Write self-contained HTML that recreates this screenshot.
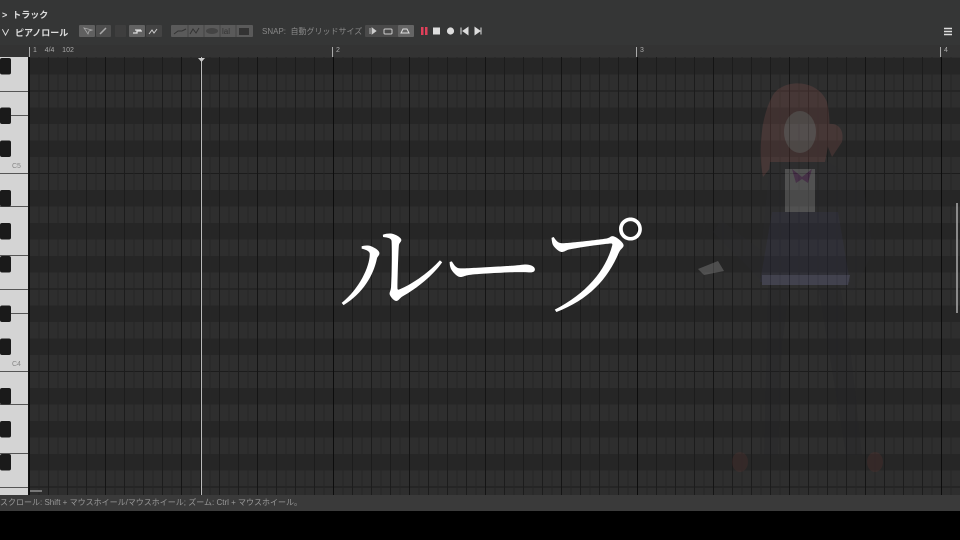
<!DOCTYPE html>
<html><head><meta charset="utf-8">
<style>
*{margin:0;padding:0;box-sizing:border-box}
body{width:960px;height:540px;background:#000;overflow:hidden;font-family:"Liberation Sans","Noto Sans CJK JP",sans-serif;position:relative}
.hdr{position:absolute;left:0;top:0;width:960px;height:45px;background:#353636}
.t{position:absolute;color:#ddd;font-size:9px;font-weight:bold;white-space:nowrap}
.btn{position:absolute;top:25px;height:12px;background:#555;border-radius:1px}
.ruler{position:absolute;left:0;top:45px;width:960px;height:12px;background:#333}
.rl{position:absolute;top:47px;font-size:7px;color:#aaa;border-left:1px solid #aaa;padding-left:3px;height:10px;line-height:8px}
.status{position:absolute;left:0;top:495px;width:960px;height:16px;background:#3a3a3a;color:#999;font-size:8px;line-height:16px}
</style></head><body>
<div class="hdr"></div>
<div class="t" style="left:2px;top:8px">&gt;&nbsp; トラック</div>
<div class="t" style="left:1px;top:26px">&#8744;&nbsp; ピアノロール</div>
<div class="btn" style="left:79px;width:16px;background:#606060"></div>
<div class="btn" style="left:96px;width:15px;background:#4e4e4e"></div>
<div class="btn" style="left:115px;width:11px;background:#3e3e3e"></div>
<div class="btn" style="left:129px;width:16px;background:#626262"></div>
<div class="btn" style="left:146px;width:16px;background:#444"></div>
<div class="btn" style="left:171px;width:82px;background:#5a5a5a"></div>
<svg style="position:absolute;left:0;top:25px" width="260" height="12">
<path d="M84 3l4 6 1-3 3-1z" stroke="#aaa" fill="none" stroke-width="0.8"/>
<path d="M100 9l6-6" stroke="#aaa" stroke-width="1.5"/>
<path d="M133 8h4v-2h5M135 5h6" stroke="#ddd" stroke-width="1.3" fill="none"/>
<path d="M149 9l3-4 2 3 3-4" stroke="#ccc" stroke-width="1" fill="none"/>
<path d="M174 9l4-3h4l4-2" stroke="#333" fill="none"/>
<path d="M190 9l3-5 3 4 3-5" stroke="#333" fill="none"/>
<ellipse cx="212" cy="6" rx="6" ry="3" fill="#444"/>
<text x="222" y="9" font-size="8" fill="#333">lal</text>
<rect x="239" y="3" width="10" height="7" fill="#333"/>
<line x1="188" y1="0" x2="188" y2="12" stroke="#444"/><line x1="204" y1="0" x2="204" y2="12" stroke="#444"/><line x1="220" y1="0" x2="220" y2="12" stroke="#444"/><line x1="236" y1="0" x2="236" y2="12" stroke="#444"/>
</svg>
<div class="t" style="left:262px;top:26px;color:#888;font-weight:normal;font-size:8px">SNAP:&nbsp; 自動グリッドサイズ</div>
<div class="btn" style="left:365px;width:34px;background:#4a4a4a"></div>
<div class="btn" style="left:398px;width:16px;background:#656565"></div>
<svg style="position:absolute;left:360px;top:25px" width="130" height="12">
<path d="M10 3v6M12 3l4 3-4 3z" stroke="#ccc" fill="#ccc" stroke-width="0.8"/>
<rect x="24" y="4" width="8" height="5" rx="1" stroke="#ccc" fill="none"/>
<path d="M41 8h8l-2-4h-4z" stroke="#ddd" fill="none"/>
<rect x="61" y="2" width="2.5" height="8" fill="#e0405a"/><rect x="65" y="2" width="2.5" height="8" fill="#e0405a"/>
<rect x="73" y="2.5" width="7" height="7" fill="#ddd"/>
<circle cx="90.5" cy="6" r="3.6" fill="#ddd"/>
<path d="M101 2.5v7M108 2.5l-5 3.5 5 3.5z" stroke="#ddd" fill="#ddd" stroke-width="1"/>
<path d="M115 2.5l5 3.5-5 3.5zM121 2.5v7" stroke="#ddd" fill="#ddd" stroke-width="1"/>
</svg>
<svg style="position:absolute;left:944px;top:27px" width="9" height="9"><path d="M0 1.5h8M0 4.5h8M0 7.5h8" stroke="#ddd" stroke-width="1.5"/></svg>
<div class="ruler"></div>
<div class="rl" style="left:29px">1 &nbsp;&nbsp;&nbsp;4/4 &nbsp;&nbsp;&nbsp;102</div>
<div class="rl" style="left:332px">2</div>
<div class="rl" style="left:636px">3</div>
<div class="rl" style="left:940px">4</div>
<svg style="position:absolute;left:0;top:57px" width="960" height="438">
<defs>
<pattern id="f" x="29" y="0" width="9.5" height="438" patternUnits="userSpaceOnUse">
<line x1="0.5" y1="0" x2="0.5" y2="438" stroke="#252525"/>
</pattern>
<pattern id="v" x="29" y="0" width="304" height="438" patternUnits="userSpaceOnUse">
<g stroke="#1c1c1c" stroke-width="1">
<line x1="19.5" y1="0" x2="19.5" y2="438"/><line x1="38.5" y1="0" x2="38.5" y2="438"/><line x1="57.5" y1="0" x2="57.5" y2="438"/>
<line x1="95.5" y1="0" x2="95.5" y2="438"/><line x1="114.5" y1="0" x2="114.5" y2="438"/><line x1="133.5" y1="0" x2="133.5" y2="438"/>
<line x1="171.5" y1="0" x2="171.5" y2="438"/><line x1="190.5" y1="0" x2="190.5" y2="438"/><line x1="209.5" y1="0" x2="209.5" y2="438"/>
<line x1="247.5" y1="0" x2="247.5" y2="438"/><line x1="266.5" y1="0" x2="266.5" y2="438"/><line x1="285.5" y1="0" x2="285.5" y2="438"/>
</g>
<g stroke="#141414" stroke-width="1"><line x1="76.5" y1="0" x2="76.5" y2="438"/><line x1="152.5" y1="0" x2="152.5" y2="438"/><line x1="228.5" y1="0" x2="228.5" y2="438"/></g>
<line x1="0.5" y1="0" x2="0.5" y2="438" stroke="#0c0c0c"/>
</pattern>
</defs>
<rect x="28" y="0" width="932" height="438" fill="#2e2e2e"/>
<g fill="#262626">
<rect x="28" y="1" width="932" height="16.5"/>
<rect x="28" y="50.5" width="932" height="16.5"/>
<rect x="28" y="83.5" width="932" height="16.5"/>
<rect x="28" y="133" width="932" height="16.5"/>
<rect x="28" y="166" width="932" height="16.5"/>
<rect x="28" y="199" width="932" height="16.5"/>
<rect x="28" y="248.5" width="932" height="16.5"/>
<rect x="28" y="281.5" width="932" height="16.5"/>
<rect x="28" y="331" width="932" height="16.5"/>
<rect x="28" y="364" width="932" height="16.5"/>
<rect x="28" y="397" width="932" height="16.5"/>
</g>
<g stroke="#1c1c1c"><line x1="28" y1="116.5" x2="960" y2="116.5"/><line x1="28" y1="314.5" x2="960" y2="314.5"/><line x1="28" y1="34" x2="960" y2="34"/><line x1="28" y1="232" x2="960" y2="232"/><line x1="28" y1="430" x2="960" y2="430"/></g>
<rect x="28" y="0" width="932" height="438" fill="url(#f)"/>
<rect x="28" y="0" width="932" height="438" fill="url(#v)"/>
<!-- faint character -->
<g opacity="0.22">
<path d="M772 40c8-18 45-20 55 5 6 25 0 55-6 75l-10-10c-15 5-30 5-40 0l-8 10c-5-25-2-60 9-80z" fill="#9a5a55"/>
<ellipse cx="800" cy="75" rx="16" ry="21" fill="#d8c0ba"/>
<path d="M820 70c15-8 25 0 22 15l-10 15z" fill="#9a5a55"/>
<path d="M770 105l58 0 35 20 10 70-20 40-25-10-65 0-50-50 8-12 40 30z" fill="#2c2c30"/>
<path d="M785 112h30v45h-30z" fill="#ccc"/>
<path d="M792 112l10 8 10-8-4 14-6-4-6 4z" fill="#9a40a0"/>
<path d="M772 155h66l12 70h-90z" fill="#3a3a58"/>
<path d="M762 218h88l-2 10h-86z" fill="#8a8ac0"/>
<path d="M768 228h22l-8 60-4 110-14 0zM818 228h22l10 60 12 110-16 0z" fill="#222226"/>
<path d="M698 212l20-8 6 10-20 4z" fill="#ddd"/>
<ellipse cx="740" cy="405" rx="8" ry="10" fill="#6a3530"/>
<ellipse cx="875" cy="405" rx="8" ry="10" fill="#6a3530"/>
</g>
<line x1="201.5" y1="0" x2="201.5" y2="438" stroke="#bbb"/>
<path d="M198 1h7l-3.5 4z" fill="#ccc"/>
<line x1="957" y1="146" x2="957" y2="256" stroke="#aaa" stroke-width="1.5"/>
<rect x="30" y="433" width="12" height="2" fill="#777"/>
<!-- piano -->
<rect x="0" y="0" width="28" height="438" fill="#d4d4d4"/>
<g stroke="#555" stroke-width="1">
<line x1="0" y1="58.5" x2="28" y2="58.5"/><line x1="0" y1="116.5" x2="28" y2="116.5"/><line x1="0" y1="149.5" x2="28" y2="149.5"/><line x1="0" y1="198.5" x2="28" y2="198.5"/><line x1="0" y1="232.5" x2="28" y2="232.5"/><line x1="0" y1="256.5" x2="28" y2="256.5"/><line x1="0" y1="314.5" x2="28" y2="314.5"/><line x1="0" y1="347.5" x2="28" y2="347.5"/><line x1="0" y1="396.5" x2="28" y2="396.5"/><line x1="0" y1="430.5" x2="28" y2="430.5"/><line x1="0" y1="34.5" x2="28" y2="34.5"/>
</g>
<g fill="#1a1a1a">
<rect x="0" y="1" width="11" height="16.5" rx="2"/>
<rect x="0" y="50.5" width="11" height="16.5" rx="2"/>
<rect x="0" y="83.5" width="11" height="16.5" rx="2"/>
<rect x="0" y="133" width="11" height="16.5" rx="2"/>
<rect x="0" y="166" width="11" height="16.5" rx="2"/>
<rect x="0" y="199" width="11" height="16.5" rx="2"/>
<rect x="0" y="248.5" width="11" height="16.5" rx="2"/>
<rect x="0" y="281.5" width="11" height="16.5" rx="2"/>
<rect x="0" y="331" width="11" height="16.5" rx="2"/>
<rect x="0" y="364" width="11" height="16.5" rx="2"/>
<rect x="0" y="397" width="11" height="16.5" rx="2"/>
</g>
<text x="12" y="111" font-size="7" fill="#888" font-family="Liberation Sans">C5</text>
<text x="12" y="309" font-size="7" fill="#888" font-family="Liberation Sans">C4</text>
<rect x="28" y="0" width="1" height="438" fill="#111"/>
</svg>
<div style="position:absolute;left:332px;top:196px;width:310px;text-align:center;color:#fff;font-size:108px;line-height:130px;font-family:'Noto Serif CJK JP','Noto Serif CJK SC',serif;letter-spacing:-6px">ループ</div>
<div class="status">スクロール: Shift + マウスホイール/マウスホイール; ズーム: Ctrl + マウスホイール。</div>
</body></html>
